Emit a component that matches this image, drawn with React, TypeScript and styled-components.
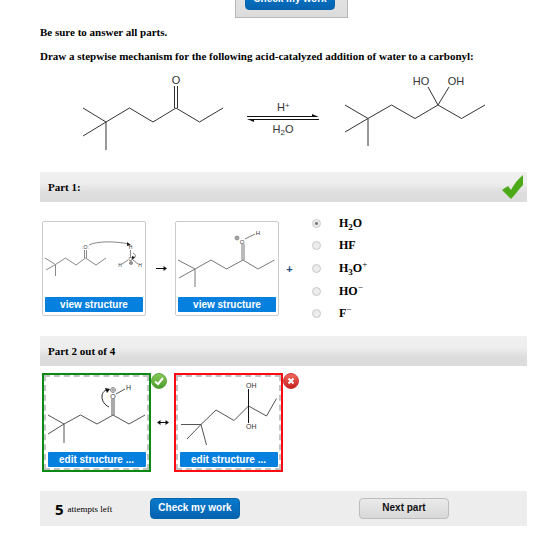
import React, { useState } from "react";
import styled, { createGlobalStyle } from "styled-components";

const serif = '"Liberation Serif", "Times New Roman", serif';
const sans = '"Liberation Sans", Arial, sans-serif';

const GlobalStyle = createGlobalStyle`
  * { box-sizing: border-box; }
  body { margin: 0; background: #fff; color: #000; font-family: ${serif}; font-size: 11px; }
  svg { display: block; flex: none; }
`;

const Page = styled.main`
  padding: 0 33px 16px 40px;
`;

const TopClip = styled.div`
  display: flex;
  align-items: flex-end;
  height: 18px;
  overflow: hidden;
  padding-left: 195px;
`;

const TopPanel = styled.div`
  flex: none;
  padding: 8px 12px 7px 9px;
  border: 1px solid #b8b8b8;
  background: linear-gradient(#e8e8e8, #dcdcdc);
`;

const ActionButton = styled.button<{ $primary?: boolean }>`
  display: block;
  width: 90px;
  height: 21px;
  padding: 0 0 2px;
  border: 1px solid ${(p) => (p.$primary ? "#0565ad" : "#bcbcbc")};
  border-radius: 4px;
  background: ${(p) => (p.$primary ? "linear-gradient(#0879cc, #0563b0)" : "linear-gradient(#eaeaea, #d8d8d8)")};
  color: ${(p) => (p.$primary ? "#fff" : "#111")};
  font: bold 10px/16px ${sans};
  white-space: nowrap;
`;

const Instructions = styled.section`
  display: flex;
  flex-direction: column;
  gap: 8px;
  padding: 6px 0;
`;

const Instruction = styled.p`
  margin: 0;
  font-size: 11px;
  font-weight: bold;
  line-height: 16px;
`;

const Reaction = styled.section`
  display: flex;
  align-items: flex-start;
  gap: 20px;
  padding: 0 0 20px 40px;
`;

const PartBar = styled.header`
  display: flex;
  align-items: center;
  justify-content: space-between;
  height: 30px;
  padding: 0 3px 0 8px;
  background: linear-gradient(#f0f0f0 0%, #ededed 40%, #dddddd 70%, #dcdcdc 100%);
`;

const PartTitle = styled.h2`
  margin: 0;
  font-size: 11px;
  line-height: 16px;
`;

const StepRow = styled.section<{ $answered?: boolean }>`
  display: flex;
  align-items: flex-start;
  padding: ${(p) => (p.$answered ? "10px 0 12px 2px" : "7px 0 19px 2px")};
`;

const Drawings = styled.div`
  display: flex;
  padding-top: 9px;
`;

const ViewCard = styled.figure`
  display: flex;
  flex-direction: column;
  width: 104px;
  height: 95px;
  margin: 0;
  border: 1px solid #ccc;
  border-radius: 2px;
`;

const EditCard = styled.figure<{ $color: string }>`
  display: flex;
  flex-direction: column;
  width: 109px;
  height: 99px;
  margin: 0;
  border: 2px solid ${(p) => p.$color};
  outline: 2px dashed #c4c4c4;
  outline-offset: -4px;
  padding: 2px;
`;

const StructureButton = styled.button`
  align-self: center;
  width: 98px;
  height: 15px;
  padding: 0;
  border: 0;
  border-radius: 1px;
  background: #0580df;
  color: #fff;
  font: bold 10px/15px ${sans};
`;

const Connector = styled.span<{ $width: number; $color?: string }>`
  display: flex;
  align-self: center;
  align-items: center;
  justify-content: center;
  width: ${(p) => p.$width}px;
  color: ${(p) => p.$color ?? "#000"};
  font: bold 11px/16px ${sans};
`;

const Graded = styled.div`
  position: relative;
`;

const Badge = styled.span`
  position: absolute;
  top: 0;
  left: 100%;
`;

const Options = styled.fieldset`
  display: grid;
  grid-template-rows: 22px 22px 24px 22px 22px;
  margin: 0;
  padding: 0 0 0 12px;
  border: 0;
`;

const Option = styled.label`
  display: flex;
  align-items: center;
  gap: 18px;
  font-size: 12px;
  font-weight: bold;
  line-height: 16px;
  sub, sup { font-size: 9px; line-height: 0; }
  sup { font-weight: normal; }
`;

const Radio = styled.input`
  appearance: none;
  width: 9px;
  height: 9px;
  margin: 0;
  border: 1px solid #c9c9c9;
  border-radius: 50%;
  background: #ececec;
  &:checked { background: radial-gradient(circle, #777 0 1px, #ececec 2px); }
`;

const Footer = styled.footer`
  display: flex;
  align-items: center;
  height: 35px;
  padding: 0 78px 0 15px;
  background: #ededed;
`;

const Attempts = styled.div`
  display: flex;
  align-items: center;
  gap: 4px;
  width: 95px;
  font-size: 9px;
  line-height: 16px;
`;

const Count = styled.strong`
  font: bold 15px/20px "Noto Sans", sans-serif;
`;

const Next = styled.div`
  margin-left: auto;
`;

const Bonds = ({ d, color = "#333", width = 1 }: { d: string; color?: string; width?: number }) => (
  <path d={d} fill="none" stroke={color} strokeWidth={width} />
);

const Atom = ({ x, y, size = 7, children, color = "#333", anchor = "middle" }: {
  x: number; y: number; size?: number; children: React.ReactNode; color?: string; anchor?: "start" | "middle" | "end";
}) => (
  <text x={x} y={y} fontSize={size} fill={color} textAnchor={anchor} fontFamily="Liberation Sans, Arial, sans-serif">
    {children}
  </text>
);

const Plus = ({ x, y, r }: { x: number; y: number; r: number }) => (
  <g fill="none" stroke="#333" strokeWidth="0.5">
    <circle cx={x} cy={y} r={r} />
    <path d={`M${x - r} ${y}h${2 * r}M${x} ${y - r}v${2 * r}`} />
  </g>
);

const Ketone = () => (
  <svg width="147" height="82" viewBox="0 0 147 82" role="img" aria-label="Ketone">
    <Bonds d="M3 38L26 52L49.500 38L73 52L96 38L119.500 52L143 38M3 66L26 52V80M94.500 38V16M97.500 38V16" />
    <Atom x={96} y={14} size={11}>O</Atom>
  </svg>
);

const Equilibrium = () => (
  <svg width="72" height="72" viewBox="0 0 72 72" role="img" aria-label="Equilibrium">
    <Bonds d="M0 46.500H70M2 49.500H72" color="#111" />
    <path d="M65 44l7 3h-7zM7 52l-7-3h7z" fill="#111" />
    <Atom x={30} y={41} size={11} anchor="start">H<tspan dy="-3" fontSize="8">+</tspan></Atom>
    <Atom x={36} y={63} size={11}>H<tspan dy="2" fontSize="8">2</tspan><tspan dy="-2">O</tspan></Atom>
  </svg>
);

const Diol = () => (
  <svg width="147" height="82" viewBox="0 0 147 82" role="img" aria-label="Geminal diol">
    <Bonds d="M6 35L29 48.500L52.500 35L76 48.500L99 35L122.500 48.500L146 35M6 62L29 48.500V76M99 35L89 17M99 35L110 17" />
    <Atom x={82} y={15} size={11}>HO</Atom>
    <Atom x={117} y={15} size={11}>OH</Atom>
  </svg>
);

const Protonation = () => (
  <svg width="102" height="75" viewBox="0 0 102 75" role="img" aria-label="Ketone and hydronium">
    <Bonds color="#888" d="M2 36L12.500 42.500L22.500 36L33 43L42.500 36L53 43L63 36M3 48L12.500 42.500V54M41.500 36V28M43.500 36V28M87.500 28V35M85 38L79 42M90 38L95 42" />
    <Bonds color="#666" width={0.8} d="M46 23C54 19 72 19 86 22M90 31Q95 34 90 37" />
    <path d="M84 20l4 3-4 1zM92 35l-3 3v-4z" fill="#222" />
    <Atom x={42.5} y={27} size={5}>:O:</Atom>
    <Atom x={87.5} y={27} size={5}>H</Atom>
    <Atom x={87.5} y={39} size={5}>O</Atom>
    <Atom x={77} y={45} size={5}>H</Atom>
    <Atom x={97} y={45} size={5}>H</Atom>
    <Plus x={88} y={41} r={1.5} />
  </svg>
);

const Oxocarbenium = () => (
  <svg width="102" height="75" viewBox="0 0 102 75" role="img" aria-label="Protonated ketone">
    <Bonds color="#777" d="M2 38L19 47L35 38L50.500 47L67 38L82 47L98.500 38M3 56L19 47V65M66 38V22M68 38V22M69 17L79 12" />
    <Atom x={66} y={22} size={6}>O</Atom>
    <Atom x={82} y={12.5} size={6}>H</Atom>
    <Plus x={61} y={16} r={2} />
  </svg>
);

const Resonance = () => (
  <svg width="101" height="75" viewBox="0 0 101 75" role="img" aria-label="Protonated ketone with electron arrow">
    <Bonds color="#555" d="M2 38L18 47L34.500 38L51 47L67 38L83 47L99 38M2 57L18 47V66M66 38V22M68 38V22M70 17L79 12" />
    <Bonds color="#222" d="M63 30C54 26 54 14 61 13" />
    <path d="M59 11l5 1-3 4z" fill="#111" />
    <Atom x={67} y={22} size={7}>O</Atom>
    <Atom x={82.5} y={12.5} size={7}>H</Atom>
    <Plus x={67} y={13} r={2.5} />
  </svg>
);

const DiolAnswer = () => (
  <svg width="101" height="75" viewBox="0 0 101 75" role="img" aria-label="Diol">
    <Bonds color="#555" d="M3 47.500H23L38 33L56 43.500L70.500 29L88.500 39L98.500 21.500M9 62L23 47.500L28.500 68" />
    <Bonds color="#111" d="M70.500 12V46" />
    <Atom x={68} y={11} size={7} anchor="start">OH</Atom>
    <Atom x={68} y={52} size={7} anchor="start">OH</Atom>
  </svg>
);

const Tick = () => (
  <svg width="22" height="25" viewBox="0 0 22 25" role="img" aria-label="Correct">
    <path d="M0 15L6 11L9 15C12 9 16 4 21 0V10C17 14 13 20 9 24C6 21 3 18 0 15Z" fill="#4caa18" />
  </svg>
);

const StatusIcon = ({ ok }: { ok?: boolean }) => (
  <svg width="16" height="16" viewBox="0 0 16 16" role="img" aria-label={ok ? "Correct" : "Incorrect"}>
    <defs>
      <linearGradient id={ok ? "ok" : "bad"} x1="0" y1="0" x2="0" y2="1">
        <stop offset="0" stopColor={ok ? "#8bca5d" : "#f46a5f"} />
        <stop offset="1" stopColor={ok ? "#489b28" : "#c51f1b"} />
      </linearGradient>
    </defs>
    <circle cx="8" cy="8" r="7.5" fill={`url(#${ok ? "ok" : "bad"})`} stroke={ok ? "#62a544" : "#c73d36"} />
    <path d={ok ? "M4 8.500L7 11L12 5" : "M5.500 5.500L10.500 10.500M10.500 5.500L5.500 10.500"} fill="none" stroke="#fff" strokeWidth="2" />
  </svg>
);

const Arrow = ({ both }: { both?: boolean }) => (
  <svg width="12" height="7" viewBox="0 0 12 7" role="img" aria-label={both ? "Resonance" : "Reacts to"}>
    <path d="M1 3.500H11" stroke="#111" />
    <path d={both ? "M12 3.500L8.500 1V6ZM0 3.500L3.500 1V6Z" : "M12 3.500L8.500 1V6Z"} fill="#111" />
  </svg>
);

const options = [
  { id: "water", label: <>H<sub>2</sub>O</> },
  { id: "hf", label: <>HF</> },
  { id: "hydronium", label: <>H<sub>3</sub>O<sup>+</sup></> },
  { id: "hydroxide", label: <>HO<sup>−</sup></> },
  { id: "fluoride", label: <>F<sup>−</sup></> },
];

export default function App() {
  const [choice, setChoice] = useState("water");
  return (
    <>
      <GlobalStyle />
      <Page>
        <TopClip>
          <TopPanel><ActionButton $primary>Check my work</ActionButton></TopPanel>
        </TopClip>
        <Instructions>
          <Instruction>Be sure to answer all parts.</Instruction>
          <Instruction>Draw a stepwise mechanism for the following acid-catalyzed addition of water to a carbonyl:</Instruction>
        </Instructions>
        <Reaction>
          <Ketone />
          <Equilibrium />
          <Diol />
        </Reaction>

        <PartBar>
          <PartTitle>Part 1:</PartTitle>
          <Tick />
        </PartBar>
        <StepRow $answered>
          <Drawings>
            <ViewCard><Protonation /><StructureButton>view structure</StructureButton></ViewCard>
            <Connector $width={29}><Arrow /></Connector>
            <ViewCard><Oxocarbenium /><StructureButton>view structure</StructureButton></ViewCard>
            <Connector $width={21} $color="#1d4f86">+</Connector>
          </Drawings>
          <Options aria-label="Second product">
            {options.map((o) => (
              <Option key={o.id}>
                <Radio type="radio" name="product" checked={choice === o.id} onChange={() => setChoice(o.id)} />
                <span>{o.label}</span>
              </Option>
            ))}
          </Options>
        </StepRow>

        <PartBar>
          <PartTitle>Part 2 out of 4</PartTitle>
        </PartBar>
        <StepRow>
          <Graded>
            <EditCard $color="#0a8a12"><Resonance /><StructureButton>edit structure ...</StructureButton></EditCard>
            <Badge><StatusIcon ok /></Badge>
          </Graded>
          <Connector $width={23}><Arrow both /></Connector>
          <Graded>
            <EditCard $color="#f80c12"><DiolAnswer /><StructureButton>edit structure ...</StructureButton></EditCard>
            <Badge><StatusIcon /></Badge>
          </Graded>
        </StepRow>

        <Footer>
          <Attempts><Count>5</Count>attempts left</Attempts>
          <ActionButton $primary>Check my work</ActionButton>
          <Next><ActionButton>Next part</ActionButton></Next>
        </Footer>
      </Page>
    </>
  );
}
